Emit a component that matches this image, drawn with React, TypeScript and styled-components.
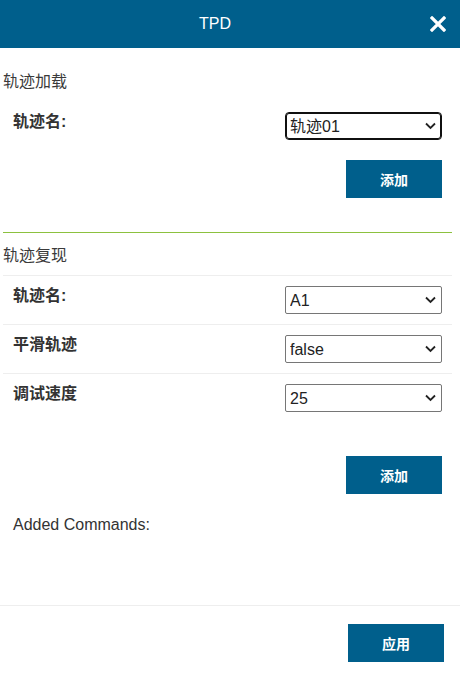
import React from "react";
import styled, { createGlobalStyle } from "styled-components";

const Global = createGlobalStyle`
  html, body { margin: 0; padding: 0; background: #fff; }
  body { font-family: "Liberation Sans", Arial, "Noto Sans CJK SC", sans-serif; color: #333; }
  * { box-sizing: border-box; }
`;

const BLUE = "#005f8c";

const Page = styled.div`
  width: 460px;
  min-height: 677px;
  display: flex;
  flex-direction: column;
  background: #fff;
`;

const Header = styled.header`
  height: 48px;
  background: ${BLUE};
  display: flex;
  align-items: center;
  padding-right: 14px;
`;

const Title = styled.h1`
  flex: 1;
  margin: 0;
  text-align: center;
  color: #fff;
  font-size: 16px;
  font-weight: normal;
  line-height: 20px;
`;

const CloseButton = styled.button`
  width: 16px;
  height: 16px;
  padding: 0;
  border: none;
  background: transparent;
  display: flex;
  align-items: center;
  justify-content: center;
  cursor: pointer;
`;

const Body = styled.div`
  padding: 0 8px 0 3px;
  display: flex;
  flex-direction: column;
`;

const Section = styled.section<{ $padTop: number; $divider?: boolean }>`
  padding-top: ${(p) => p.$padTop}px;
  padding-bottom: ${(p) => (p.$divider ? 34 : 0)}px;
  border-bottom: ${(p) => (p.$divider ? "1px solid #8cc13f" : "none")};
`;

const SectionTitle = styled.h2`
  margin: 0 0 9px;
  font-size: 16px;
  font-weight: normal;
  line-height: 20px;
  color: #3a3a3a;
`;

const Row = styled.div<{ $line?: boolean }>`
  display: flex;
  align-items: flex-start;
  justify-content: space-between;
  padding: 10px 10px 10px 10px;
  border-top: 1px solid ${(p) => (p.$line ? "#eeeeee" : "transparent")};
`;

const Label = styled.label`
  font-size: 16px;
  font-weight: bold;
  line-height: 20px;
  color: #333;
`;

const SelectWrap = styled.div`
  position: relative;
  width: 157px;
  height: 28px;
`;

const Select = styled.select<{ $focused?: boolean }>`
  appearance: none;
  -webkit-appearance: none;
  width: 100%;
  height: 100%;
  margin: 0;
  padding: 0 24px 0 4px;
  font-family: "Liberation Sans", Arial, "Noto Sans CJK SC", sans-serif;
  font-size: 16px;
  color: #222;
  background: #fff;
  border: 1px solid ${(p) => (p.$focused ? "#101010" : "#767676")};
  border-radius: ${(p) => (p.$focused ? "4px" : "2px")};
  box-shadow: ${(p) => (p.$focused ? "inset 0 0 0 1px #101010" : "none")};
  outline: none;
`;

const Chevron = styled.svg`
  position: absolute;
  right: 6px;
  top: 50%;
  margin-top: -4px;
  width: 11px;
  height: 8px;
  pointer-events: none;
`;

const ButtonRow = styled.div<{ $mt: number; $pr: number }>`
  display: flex;
  justify-content: flex-end;
  margin-top: ${(p) => p.$mt}px;
  padding-right: ${(p) => p.$pr}px;
`;

const PrimaryButton = styled.button`
  width: 96px;
  height: 38px;
  border: none;
  border-radius: 0;
  background: ${BLUE};
  color: #fff;
  font-family: "Liberation Sans", Arial, "Noto Sans CJK SC", sans-serif;
  font-size: 14px;
  font-weight: bold;
  cursor: pointer;
`;

const Commands = styled.div`
  padding: 21px 10px 0;
  min-height: 111px;
  font-size: 16px;
  line-height: 20px;
  color: #333;
`;

const Footer = styled.footer`
  border-top: 1px solid #eeeeee;
  padding: 18px 16px 16px;
  display: flex;
  justify-content: flex-end;
`;

const SelectField: React.FC<{ value: string; options: string[]; focused?: boolean }> = ({
  value,
  options,
  focused,
}) => (
  <SelectWrap>
    <Select $focused={focused} defaultValue={value}>
      {options.map((o) => (
        <option key={o} value={o}>
          {o}
        </option>
      ))}
    </Select>
    <Chevron viewBox="0 0 11 8">
      <path d="M1 1.5 L5.5 6 L10 1.5" fill="none" stroke="#222" strokeWidth="1.8" />
    </Chevron>
  </SelectWrap>
);

export default function App() {
  return (
    <Page>
      <Global />
      <Header>
        <Title>TPD</Title>
        <CloseButton aria-label="close">
          <svg width="16" height="16" viewBox="0 0 16 16">
            <path d="M2 2 L14 14 M14 2 L2 14" stroke="#fff" strokeWidth="3.2" strokeLinecap="square" />
          </svg>
        </CloseButton>
      </Header>
      <Body>
        <Section $padTop={24} $divider>
          <SectionTitle>轨迹加载</SectionTitle>
          <Row>
            <Label>轨迹名:</Label>
            <SelectField value="轨迹01" options={["轨迹01"]} focused />
          </Row>
          <ButtonRow $mt={10} $pr={10}>
            <PrimaryButton>添加</PrimaryButton>
          </ButtonRow>
        </Section>
        <Section $padTop={13}>
          <SectionTitle>轨迹复现</SectionTitle>
          <Row $line>
            <Label>轨迹名:</Label>
            <SelectField value="A1" options={["A1"]} />
          </Row>
          <Row $line>
            <Label>平滑轨迹</Label>
            <SelectField value="false" options={["false", "true"]} />
          </Row>
          <Row $line>
            <Label>调试速度</Label>
            <SelectField value="25" options={["25"]} />
          </Row>
          <ButtonRow $mt={34} $pr={10}>
            <PrimaryButton>添加</PrimaryButton>
          </ButtonRow>
        </Section>
        <Commands>Added Commands:</Commands>
      </Body>
      <Footer>
        <PrimaryButton>应用</PrimaryButton>
      </Footer>
    </Page>
  );
}
